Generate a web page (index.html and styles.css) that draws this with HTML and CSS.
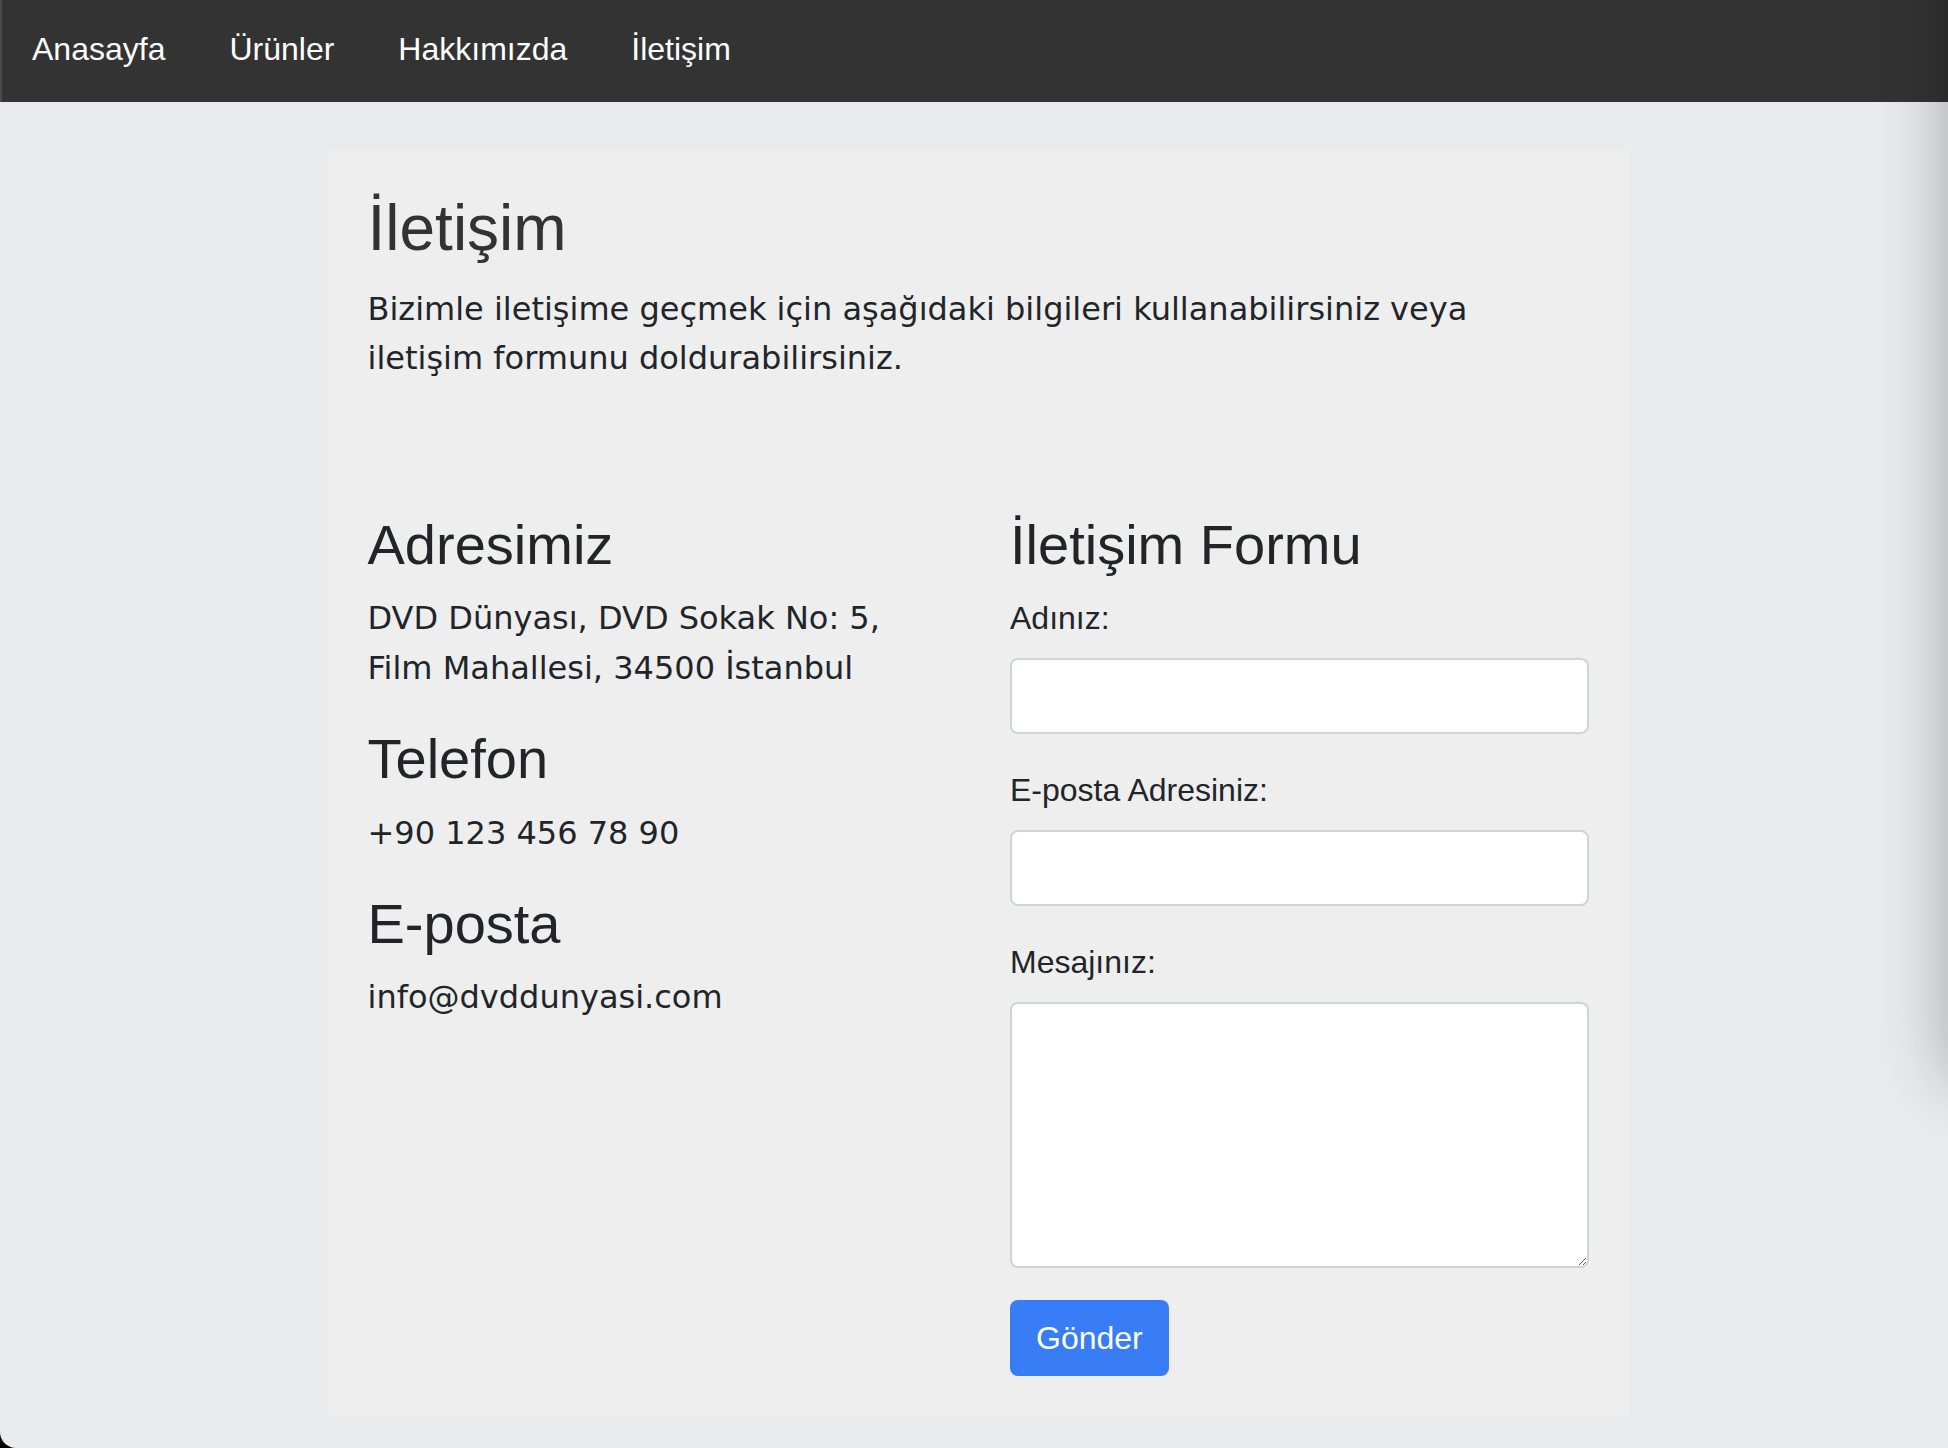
FILE: index.html
```html
<!DOCTYPE html>
<html lang="tr">
<head>
<meta charset="utf-8">
<title>İletişim - DVD Dünyası</title>
<link rel="stylesheet" href="styles.css">
</head>
<body>
<div class="page">
  <nav class="topnav">
    <a class="nav-link" href="#">Anasayfa</a>
    <a class="nav-link" href="#">Ürünler</a>
    <a class="nav-link" href="#">Hakkımızda</a>
    <a class="nav-link" href="#">İletişim</a>
  </nav>
  <main class="main">
    <section class="card">
      <h1 class="title">İletişim</h1>
      <p class="text lead">Bizimle iletişime geçmek için aşağıdaki bilgileri kullanabilirsiniz veya iletişim formunu doldurabilirsiniz.</p>
      <div class="row">
        <div class="col">
          <h3 class="heading">Adresimiz</h3>
          <p class="text">DVD Dünyası, DVD Sokak No: 5, Film Mahallesi, 34500 İstanbul</p>
          <h3 class="heading">Telefon</h3>
          <p class="text">+90 123 456 78 90</p>
          <h3 class="heading">E-posta</h3>
          <p class="text">info@dvddunyasi.com</p>
        </div>
        <div class="col">
          <h3 class="heading">İletişim Formu</h3>
          <form class="form">
            <div class="group">
              <label class="label" for="name">Adınız:</label>
              <input class="control" type="text" id="name">
            </div>
            <div class="group">
              <label class="label" for="email">E-posta Adresiniz:</label>
              <input class="control" type="email" id="email">
            </div>
            <div class="group">
              <label class="label" for="msg">Mesajınız:</label>
              <textarea class="control area" id="msg"></textarea>
            </div>
            <button class="btn" type="button">Gönder</button>
          </form>
        </div>
      </div>
    </section>
  </main>
  <div class="edge-shadow"></div>
</div>
</body>
</html>
```

FILE: styles.css
```css
html {
  background: #000;
}

body {
  margin: 0;
  overflow: hidden;
}

.page {
  position: relative;
  min-height: 100vh;
  background: #e9ebef;
  border-bottom-left-radius: 16px;
  overflow: hidden;
  font-family: "Liberation Sans", Arial, sans-serif;
  color: #212529;
}

.topnav {
  display: flex;
  height: 102px;
  background: #333333;
  box-shadow: inset 2px 0 0 #4a4a4a;
}

.nav-link {
  display: block;
  padding: 31px 32px 0;
  font-size: 32px;
  color: #ffffff;
  text-decoration: none;
}

.main {
  padding: 48px 0 0 8px;
}

.card {
  box-sizing: border-box;
  width: 1301px;
  margin: 0 auto;
  padding: 40px;
  background: #eeeeee;
}

.title {
  margin: 0 0 18px;
  font-size: 64px;
  font-weight: 400;
  line-height: 1.2;
  color: #333333;
}

.text {
  margin: 0 0 32px;
  font-family: "DejaVu Sans", Verdana, sans-serif;
  font-size: 32px;
  line-height: 49.6px;
  color: #212529;
}

.lead {
  margin-bottom: 0;
}

.row {
  display: grid;
  grid-template-columns: 1fr 1fr;
  column-gap: 64px;
  margin-top: 127px;
}

.heading {
  margin: 0 0 16px;
  font-size: 56px;
  font-weight: 400;
  line-height: 1.2;
  color: #212529;
}

.form {
  margin: 0;
}

.group {
  margin-bottom: 32px;
}

.label {
  display: block;
  margin-bottom: 16px;
  font-size: 32px;
  line-height: 48px;
  color: #212529;
}

.control {
  display: block;
  box-sizing: border-box;
  width: 100%;
  height: 76px;
  margin: 0;
  padding: 12px 24px;
  font-family: "Liberation Sans", Arial, sans-serif;
  font-size: 32px;
  background: #ffffff;
  border: 2px solid #ced4da;
  border-radius: 8px;
  outline: none;
}

.area {
  height: 266px;
  resize: vertical;
}

.btn {
  display: block;
  height: 76px;
  padding: 0 26px;
  font-family: "Liberation Sans", Arial, sans-serif;
  font-size: 32px;
  line-height: 76px;
  color: #ffffff;
  background: #387cf6;
  border: 0;
  border-radius: 8px;
}

.edge-shadow {
  position: absolute;
  top: -100px;
  right: -100px;
  width: 100px;
  height: 1180px;
  box-shadow: 0 0 70px 0 rgba(0, 0, 0, 0.3);
  pointer-events: none;
}
```
